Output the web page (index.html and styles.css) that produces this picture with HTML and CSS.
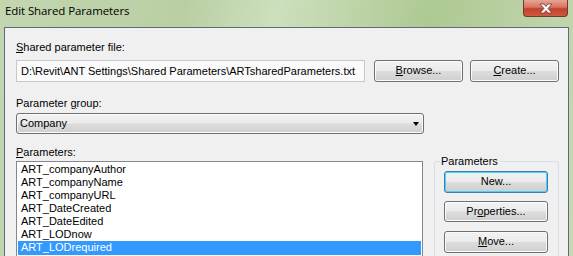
FILE: index.html
```html
<!DOCTYPE html>
<html>
<head>
<meta charset="utf-8">
<link rel="stylesheet" href="styles.css">
</head>
<body>
<div class="frame">
  <div class="titlebar">
    <span class="title">Edit Shared Parameters</span>
    <span class="close"><svg width="16" height="11" viewBox="0 0 16 11"><path d="M2 1 L6 1 L8 3.5 L10 1 L14 1 L10 5.5 L14 10 L10 10 L8 7.5 L6 10 L2 10 L6 5.5 Z" fill="#fff" stroke="#6a3a3a" stroke-width="0.8"/></svg></span>
  </div>
  <div class="client">
    <div class="label l1"><u>S</u>hared parameter file:</div>
    <div class="filerow">
      <div class="textbox">D:\Revit\ANT Settings\Shared Parameters\ARTsharedParameters.txt</div>
      <div class="btn browse"><u>B</u>rowse...</div>
      <div class="btn create"><u>C</u>reate...</div>
    </div>
    <div class="label l2">Parameter <u>g</u>roup:</div>
    <div class="combo"><span>Company</span><span class="arrow"></span></div>
    <div class="label l3"><u>P</u>arameters:</div>
    <div class="lower">
      <div class="list">
        <div class="item">ART_companyAuthor</div>
        <div class="item">ART_companyName</div>
        <div class="item">ART_companyURL</div>
        <div class="item">ART_DateCreated</div>
        <div class="item">ART_DateEdited</div>
        <div class="item">ART_LODnow</div>
        <div class="item sel">ART_LODrequired</div>
      </div>
      <div class="group">
        <div class="legend">Parameters</div>
        <div class="btn gbtn default">New...</div>
        <div class="btn gbtn">Pr<u>o</u>perties...</div>
        <div class="btn gbtn"><u>M</u>ove...</div>
      </div>
    </div>
  </div>
</div>
</body>
</html>
```
FILE: styles.css
```css
html, body {
  margin: 0;
  padding: 0;
  width: 573px;
  height: 256px;
  overflow: hidden;
}
body {
  font-family: "Liberation Sans", Arial, sans-serif;
  font-size: 11px;
  color: #000;
}
.frame {
  width: 573px;
  height: 256px;
  overflow: hidden;
  background: linear-gradient(100deg, #c3d6b0 0%, #b9cfa3 30%, #cddfbd 45%, #aec993 70%, #c6d9b3 100%);
  display: flex;
  flex-direction: column;
}
.titlebar {
  height: 27px;
  display: flex;
  align-items: flex-start;
  justify-content: space-between;
  flex-shrink: 0;
}
.title {
  font-family: "Open Sans", "Noto Sans", sans-serif;
  font-size: 11.5px;
  margin: 3px 0 0 5px;
  letter-spacing: -0.1px;
}
.close {
  width: 45px;
  height: 17px;
  margin-right: 5px;
  box-sizing: border-box;
  border: 1px solid #6d3b36;
  border-top: none;
  border-radius: 0 0 4px 4px;
  background: linear-gradient(#e8a495 0%, #d8735f 45%, #c2412a 55%, #d05a3f 100%);
  display: flex;
  align-items: center;
  justify-content: center;
}
.client {
  margin-left: 4px;
  width: 565px;
  flex: 1;
  min-height: 0;
  overflow: hidden;
  box-sizing: border-box;
  background: #f0f0f0;
  border: 1px solid #5c6c7a;
  border-bottom: none;
  padding: 0 8px 0 11px;
}
.label {
  height: 14px;
  line-height: 14px;
}
u { text-decoration: underline; text-underline-offset: 1px; }
.l1 { margin-top: 12px; }
.filerow {
  display: flex;
  margin-top: 6px;
  height: 22px;
}
.textbox {
  width: 349px;
  box-sizing: border-box;
  border: 1px solid #c5c9cf;
  background: #fafafa;
  padding: 0 0 0 4px;
  line-height: 20px;
  white-space: nowrap;
  overflow: hidden;
}
.btn {
  box-sizing: border-box;
  border: 1px solid #707070;
  border-radius: 3px;
  background: linear-gradient(#f2f2f2 0%, #ebebeb 48%, #dddddd 52%, #cfcfcf 100%);
  box-shadow: inset 0 0 0 1px #fbfbfb;
  text-align: center;
  line-height: 19px;
}
.browse { width: 89px; margin-left: 9px; height: 22px; }
.create { width: 89px; margin-left: 7px; height: 22px; }
.l2 { margin-top: 14px; }
.combo {
  margin-top: 3px;
  width: 408px;
  height: 21px;
  box-sizing: border-box;
  border: 1px solid #707070;
  border-radius: 3px;
  background: linear-gradient(#f2f2f2 0%, #ebebeb 48%, #dddddd 52%, #cfcfcf 100%);
  box-shadow: inset 0 0 0 1px #fbfbfb;
  display: flex;
  align-items: center;
  justify-content: space-between;
  padding: 0 4px 0 3px;
  line-height: 19px;
}
.arrow {
  width: 0;
  height: 0;
  border-left: 3.5px solid transparent;
  border-right: 3.5px solid transparent;
  border-top: 4px solid #000;
  margin-top: 1px;
}
.l3 { margin-top: 11px; }
.lower {
  display: flex;
  margin-top: 2px;
  align-items: flex-start;
}
.list {
  width: 407px;
  height: 100px;
  box-sizing: border-box;
  border: 1px solid #828790;
  border-bottom: none;
  background: #fff;
  padding: 1px 1px 0 1px;
}
.item {
  height: 13px;
  line-height: 13px;
  padding-left: 3px;
  white-space: nowrap;
}
.item.sel {
  background: #3399ff;
  color: #fff;
  height: 14px;
}
.group {
  position: relative;
  margin-left: 11px;
  width: 125px;
  height: 100px;
  box-sizing: border-box;
  border: 1px solid #d5dfe5;
  border-bottom: none;
  border-radius: 3px 3px 0 0;
  padding: 9px 0 0 9px;
  display: flex;
  flex-direction: column;
  gap: 8px;
}
.legend {
  position: absolute;
  top: -8px;
  left: 5px;
  background: #f0f0f0;
  padding: 0 2px 0 1px;
  line-height: 14px;
}
.gbtn {
  width: 104px;
  height: 22px;
}
.gbtn:nth-of-type(3) { height: 21px; }
.gbtn:nth-of-type(4) { margin-top: 1px; }
.default {
  border-color: #3c7fb1;
  box-shadow: inset 0 0 0 1px #48d2f6;
}
```
